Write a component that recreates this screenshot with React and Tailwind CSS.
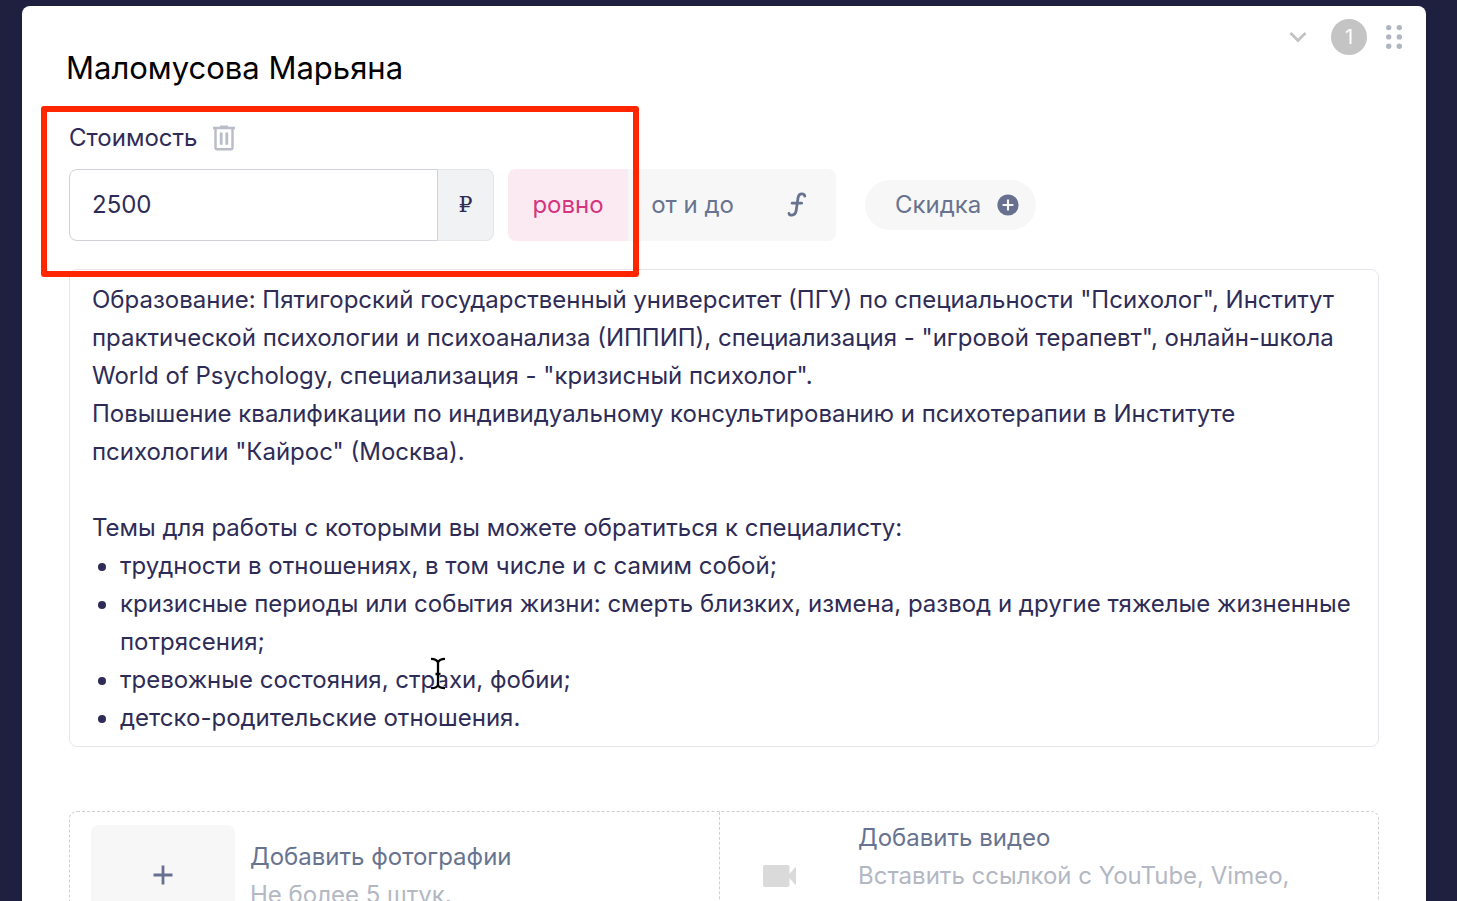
function TrashIcon() {
  return (
    <svg width="22" height="26" viewBox="0 0 22 26" fill="none" aria-hidden="true">
      <path d="M7 .5h8v1.200H22v2.600H0V1.700h7z" fill="#b9bdc8" />
      <path d="M2.500 3v19.400c0 1 .8 1.800 1.800 1.800h13.400c1 0 1.800-.8 1.800-1.800V3" stroke="#b9bdc8" strokeWidth="2.400" />
      <path d="M8.200 7.500v12.300M13.800 7.500v12.300" stroke="#b9bdc8" strokeWidth="2.800" />
    </svg>
  );
}

function FunctionIcon() {
  return (
    <svg width="20" height="26" viewBox="0 0 20 26" fill="none" stroke="#68738f" strokeWidth="2.800" strokeLinecap="round" strokeLinejoin="round" aria-hidden="true">
      <path d="M17.800 4.200C17.600 2.600 16.600 1.800 14.900 1.800C12.400 1.800 11.400 3.300 11 6L9.200 18.600C8.700 21.600 7.600 23.100 5 23.100C3.200 23.100 2.200 22.600 2 21.400" />
      <path d="M5.200 11.200H14.600" />
    </svg>
  );
}

function PlusCircleIcon() {
  return (
    <svg width="22" height="22" viewBox="0 0 22 22" aria-hidden="true">
      <circle cx="11" cy="11" r="10.600" fill="#68708f" />
      <path d="M11 5.600v10.800M5.600 11h10.800" stroke="#f7f7f7" strokeWidth="2.100" />
    </svg>
  );
}

function GripIcon() {
  return (
    <svg width="16" height="26" viewBox="0 0 16 26" fill="#b0b6c1" aria-hidden="true">
      {[3.6, 12.9, 22.2].map((cy) => (
        <g key={cy}>
          <circle cx="2.700" cy={cy} r="2.700" />
          <circle cx="13.300" cy={cy} r="2.700" />
        </g>
      ))}
    </svg>
  );
}

function VideoIcon() {
  return (
    <svg width="34" height="22" viewBox="0 0 34 22" fill="#dadada" aria-hidden="true">
      <path d="M2 0h22.500a2 2 0 0 1 2 2v6.800L33 1.500v19l-6.500-7.300V20a2 2 0 0 1-2 2H2a2 2 0 0 1-2-2V2a2 2 0 0 1 2-2z" />
    </svg>
  );
}

function TextCursor() {
  const beam =
    'M1 1.800C5 1.800 7.200 3 8 5.500C8.800 3 11 1.800 15 1.800M8 5V29M1 31.200C5 31.200 7.200 30.500 8 28C8.800 30.500 11 31.200 15 31.200M5.500 17H10.500';
  return (
    <svg className="pointer-events-none absolute top-[387px] left-[360px]" width="16" height="34" viewBox="0 0 16 34" fill="none" aria-hidden="true">
      <path d={beam} stroke="#fff" strokeOpacity="0.7" strokeWidth="4" />
      <path d={beam} stroke="#000" strokeWidth="2.300" />
    </svg>
  );
}

const topics = [
  'трудности в отношениях, в том числе и с самим собой;',
  'кризисные периоды или события жизни: смерть близких, измена, развод и другие тяжелые жизненные потрясения;',
  'тревожные состояния, страхи, фобии;',
  'детско-родительские отношения.',
];

export default function App() {
  return (
    <div className="h-screen overflow-hidden bg-[#1f1f3f] pt-[6px] pr-[31px] pl-[22px] font-['Inter',sans-serif] text-[24px] leading-[38px] text-[#2e2c57]">
      <main className="rounded-t-lg bg-white pb-12">
        <header className="flex items-start justify-between pr-[24px] pl-[44px]">
          <h1 className="pt-[42px] text-[31px] leading-[40px] text-black">Маломусова Марьяна</h1>
          <div className="flex items-center pt-[13px]">
            <button type="button" aria-label="Свернуть" className="mr-[24px]">
              <svg width="18" height="12" viewBox="0 0 18 12" fill="none" stroke="#c3c3c3" strokeWidth="2.800" aria-hidden="true">
                <path d="M1.500 2l7.500 7.500L16.500 2" />
              </svg>
            </button>
            <span className="flex size-[36px] items-center justify-center rounded-full bg-[#c4c4c4] text-[20px] text-white">1</span>
            <button type="button" aria-label="Переместить" className="ml-[19px]">
              <GripIcon />
            </button>
          </div>
        </header>

        <div className="px-[47px]">
          <section className="relative z-10 pt-[31px]">
            <div className="flex items-center gap-[16px]">
              <label htmlFor="price">Стоимость</label>
              <button type="button" aria-label="Удалить стоимость">
                <TrashIcon />
              </button>
            </div>
            <div className="mt-[12px] flex items-center">
              <div className="flex h-[72px] w-[425px]">
                <input
                  id="price"
                  type="text"
                  defaultValue="2500"
                  className="min-w-0 flex-1 rounded-l-lg border border-[#d0d2d7] bg-white px-[22px] outline-none"
                />
                <span className="flex w-[56px] items-center justify-center rounded-r-lg border border-l-0 border-[#e3e5e9] bg-[#f1f2f4] font-['DejaVu_Serif',serif] text-[22px]">
                  ₽
                </span>
              </div>
              <div className="ml-[14px] flex h-[72px] overflow-hidden rounded-lg bg-[#f7f7f7] text-[#68738f]">
                <button type="button" aria-pressed="true" className="w-[120px] bg-[#fceaf2] text-[#d4357f]">ровно</button>
                <button type="button" aria-pressed="false" className="w-[129px]">от и до</button>
                <button type="button" aria-pressed="false" aria-label="Формула" className="flex w-[79px] items-center justify-center">
                  <FunctionIcon />
                </button>
              </div>
              <button type="button" className="ml-[29px] flex h-[50px] items-center gap-[16px] rounded-full bg-[#f7f7f7] pr-[17px] pl-[30px] text-[#68738f]">
                Скидка
                <PlusCircleIcon />
              </button>
            </div>
            <div className="pointer-events-none absolute top-[18px] -left-[28px] h-[171px] w-[598px] rounded-[3px] border-6 border-[#ff2600]" />
          </section>

          <div
            role="textbox"
            aria-multiline="true"
            aria-label="Описание"
            tabIndex={0}
            className="relative mt-[28px] rounded-lg border border-[#e6e7ec] px-[22px] pt-[11px] pb-[9px] outline-none"
          >
            <p>
              Образование: Пятигорский государственный университет (ПГУ) по специальности "Психолог", Институт
              практической психологии и психоанализа (ИППИП), специализация - "игровой терапевт", онлайн-школа World of
              Psychology, специализация - "кризисный психолог".
            </p>
            <p>
              Повышение квалификации по индивидуальному консультированию и психотерапии в Институте психологии "Кайрос"
              (Москва).
            </p>
            <p className="mt-[38px]">Темы для работы с которыми вы можете обратиться к специалисту:</p>
            <ul className="list-disc pl-[28px]">
              {topics.map((topic) => (
                <li key={topic}>{topic}</li>
              ))}
            </ul>
            <TextCursor />
          </div>

          <section className="mt-[64px] grid grid-cols-[651fr_659fr] rounded-lg border border-dashed border-[#cfcfcf] text-[#68738f]">
            <div className="flex items-start gap-[15px] border-r border-dashed border-[#cfcfcf] pt-[13px] pb-[14px] pl-[21px]">
              <button type="button" aria-label="Загрузить фотографии" className="flex h-[100px] w-[144px] items-center justify-center rounded-lg bg-[#f7f7f7]">
                <svg width="20" height="20" viewBox="0 0 20 20" stroke="#68708f" strokeWidth="2.800" aria-hidden="true">
                  <path d="M10 .5v19M.5 10h19" />
                </svg>
              </button>
              <div className="pt-[13px]">
                <p>Добавить фотографии</p>
                <p className="text-[#b3b8c3]">Не более 5 штук.</p>
              </div>
            </div>
            <div className="flex items-center gap-[61px] pl-[43px]">
              <VideoIcon />
              <div className="self-start pt-[7px]">
                <p>Добавить видео</p>
                <p className="text-[#b3b8c3]">Вставить ссылкой с YouTube, Vimeo,</p>
              </div>
            </div>
          </section>
        </div>
      </main>
    </div>
  );
}
